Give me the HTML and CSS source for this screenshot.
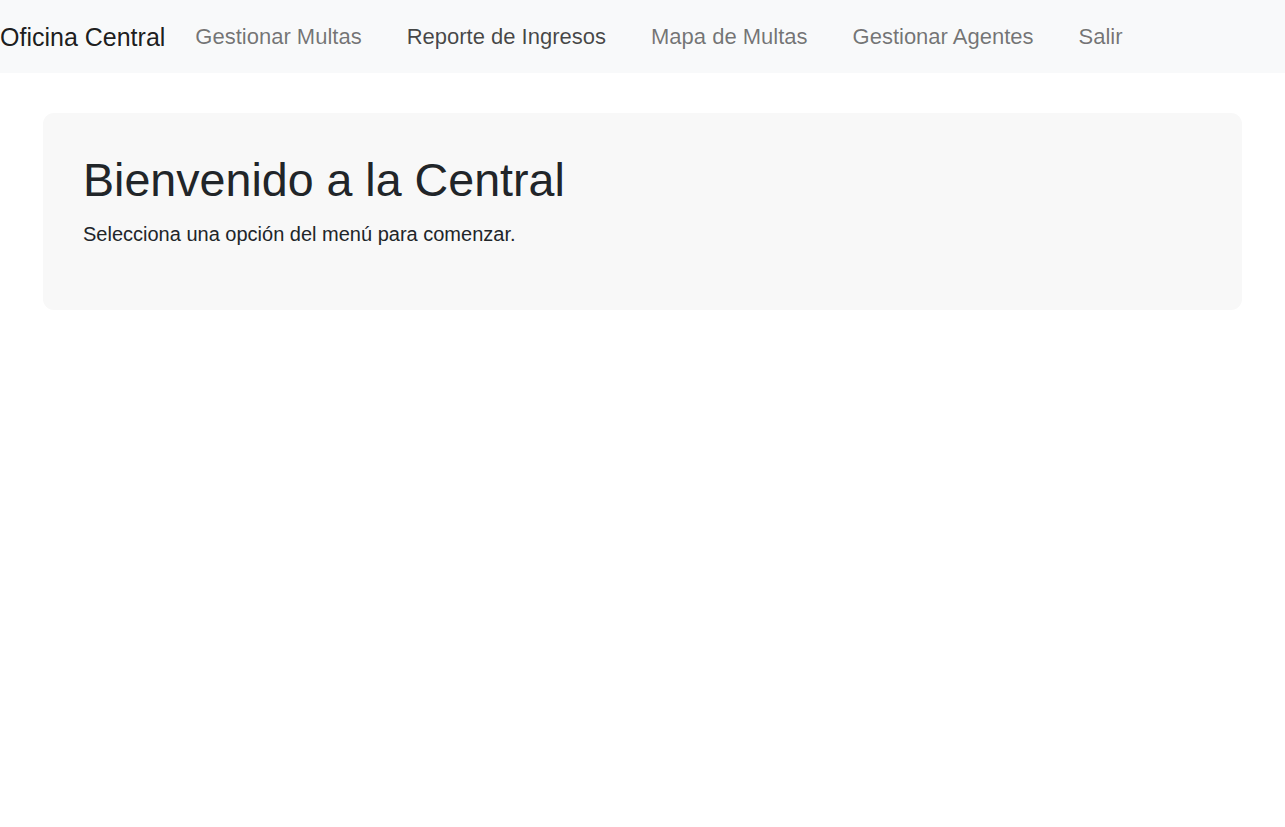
FILE: index.html
```html
<!DOCTYPE html>
<html lang="es">
<head>
<meta charset="utf-8">
<title>Oficina Central</title>
<link rel="stylesheet" href="styles.css">
</head>
<body>
<nav class="navbar">
  <a class="brand" href="#">Oficina Central</a>
  <ul class="nav-links">
    <li><a class="nav-link" href="#">Gestionar Multas</a></li>
    <li><a class="nav-link active" href="#">Reporte de Ingresos</a></li>
    <li><a class="nav-link" href="#">Mapa de Multas</a></li>
    <li><a class="nav-link" href="#">Gestionar Agentes</a></li>
    <li><a class="nav-link" href="#">Salir</a></li>
  </ul>
</nav>
<main class="content">
  <section class="welcome">
    <h1 class="welcome-title">Bienvenido a la Central</h1>
    <p class="welcome-text">Selecciona una opción del menú para comenzar.</p>
  </section>
</main>
</body>
</html>
```
FILE: styles.css
```css
* { box-sizing: border-box; }
html, body {
  margin: 0;
  padding: 0;
  background: #ffffff;
  font-family: "Liberation Sans", Arial, sans-serif;
  color: #212529;
}
.navbar {
  height: 73px;
  background: #f8f9fa;
  display: flex;
  align-items: center;
  padding: 0;
}
.brand {
  font-size: 25px;
  line-height: 1.5;
  color: rgba(0, 0, 0, 0.9);
  text-decoration: none;
  margin-right: 30px;
  padding-top: 2px;
}
.nav-links {
  list-style: none;
  margin: 0;
  padding: 0;
  display: flex;
  gap: 45px;
}
.nav-link {
  font-size: 22px;
  line-height: 1.5;
  color: rgba(0, 0, 0, 0.55);
  text-decoration: none;
}
.nav-link.active {
  color: rgba(0, 0, 0, 0.72);
}
.content {
  padding: 40px 43px 0;
}
.welcome {
  background: #f8f8f8;
  border-radius: 11px;
  padding: 40px;
}
.welcome-title {
  margin: 0 0 10px;
  font-size: 46.6px;
  font-weight: 400;
  line-height: 1.2;
  color: #212529;
}
.welcome-text {
  margin: 0 0 21px;
  font-size: 20px;
  line-height: 1.5;
  color: #212529;
}
```
